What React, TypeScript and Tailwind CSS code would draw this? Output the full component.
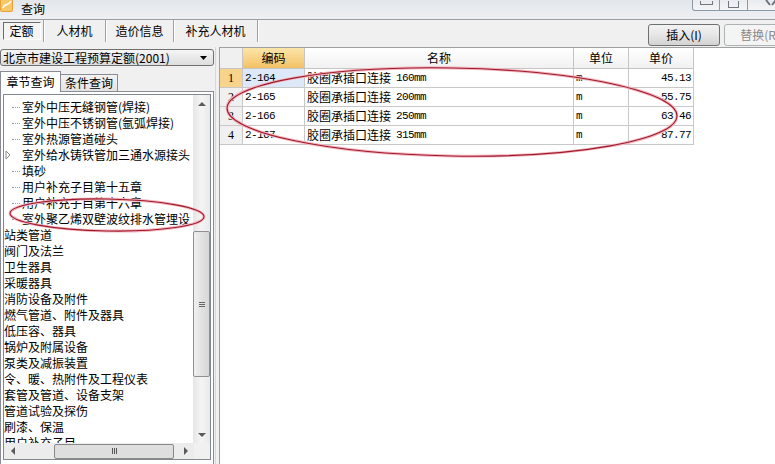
import React from "react";

const tree = [
  { t: "室外中压无缝钢管(焊接)", child: true },
  { t: "室外中压不锈钢管(氩弧焊接)", child: true },
  { t: "室外热源管道碰头", child: true },
  { t: "室外给水铸铁管加三通水源接头", child: true, arrow: true },
  { t: "填砂", child: true },
  { t: "用户补充子目第十五章", child: true },
  { t: "用户补充子目第十六章", child: true },
  { t: "室外聚乙烯双壁波纹排水管埋设", child: true },
  { t: "站类管道" },
  { t: "阀门及法兰" },
  { t: "卫生器具" },
  { t: "采暖器具" },
  { t: "消防设备及附件" },
  { t: "燃气管道、附件及器具" },
  { t: "低压容、器具" },
  { t: "锅炉及附属设备" },
  { t: "泵类及减振装置" },
  { t: "令、暖、热附件及工程仪表" },
  { t: "套管及管道、设备支架" },
  { t: "管道试验及探伤" },
  { t: "刷漆、保温" },
  { t: "用户补充子目" },
];

const rows = [
  { no: "1", code: "2-164", size: "160mm", price: "45.13" },
  { no: "2", code: "2-165", size: "200mm", price: "55.75" },
  { no: "3", code: "2-166", size: "250mm", price: "63.46" },
  { no: "4", code: "2-167", size: "315mm", price: "87.77" },
];

const mono = "font-['Liberation_Mono','Noto_Sans_CJK_SC',monospace] text-[11px] tracking-[-0.6px]";

const Tri = ({ dir }: { dir: "up" | "down" | "left" | "right" }) => {
  const pts = {
    up: "0,5 4,1 8,5",
    down: "0,1 4,5 8,1",
    left: "5,0 1,4 5,8",
    right: "1,0 5,4 1,8",
  }[dir];
  const vert = dir === "up" || dir === "down";
  return (
    <svg width={vert ? 8 : 6} height={vert ? 6 : 8} viewBox={vert ? "0 0 8 6" : "0 0 6 8"}>
      <polygon points={pts} fill="#5a5a5a" />
    </svg>
  );
};

function TitleBar() {
  return (
    <div className="flex h-[20px] shrink-0 items-start overflow-hidden border-b border-[#9a9fa6] bg-gradient-to-b from-[#e2e6eb] to-[#eef0f3]">
      <svg width="14" height="14" viewBox="0 0 14 14" className="-mt-[2px] shrink-0">
        <rect x="0" y="0" width="13" height="14" rx="2" fill="#e9a23b" />
        <rect x="1" y="1" width="11" height="12" rx="1" fill="#f6c868" />
        <path d="M3 10 C5 4, 8 9, 11 3" stroke="#fff" strokeWidth="1.5" fill="none" />
      </svg>
      <span className="ml-[7px] mt-[3px] text-[12px]">查询</span>
      <div className="flex-1" />
      <div className="-mr-[19px] flex shrink-0">
        <div className="flex h-[11px] w-[28px] items-start justify-center rounded-bl-[3px] border border-t-0 border-[#8e99a6] bg-gradient-to-b from-[#e8ebef] to-[#f4f5f7]">
          <div className="mt-[1px] h-[4px] w-[13px] border border-t-0 border-[#707781]" />
        </div>
        <div className="flex h-[11px] w-[28px] items-start justify-center border-b border-r border-[#8e99a6] bg-gradient-to-b from-[#e8ebef] to-[#f4f5f7]">
          <div className="mt-[1px] h-[7px] w-[11px] border border-t-0 border-[#707781]" />
        </div>
        <div className="flex h-[11px] w-[46px] items-start justify-center rounded-br-[3px] border-b border-r border-[#8e99a6] bg-gradient-to-b from-[#e8ebef] to-[#f4f5f7]">
          <svg width="12" height="8" viewBox="0 0 12 8">
            <path d="M1 0 L5 5 M11 0 L7 5" stroke="#6b727c" strokeWidth="2" />
          </svg>
        </div>
      </div>
    </div>
  );
}

function TopRow() {
  const tabs = [
    { t: "定额", w: "w-[44px]", on: true },
    { t: "人材机", w: "w-[62px]" },
    { t: "造价信息", w: "w-[68px]" },
    { t: "补充人材机", w: "w-[84px]" },
  ];
  return (
    <div className="flex h-[27px] shrink-0 overflow-hidden">
      <div className="flex h-[22px]">
        {tabs.map((tab) => (
          <div key={tab.t} className={`${tab.w} flex items-center justify-center border-r border-[#a0a0a0] shadow-[1px_0_0_#fff]`}>
            {tab.on ? (
              <div className="flex h-[18px] w-[38px] items-center justify-center border border-b-white border-l-[#6d6d6d] border-r-white border-t-[#6d6d6d] bg-[#f4f4f4]">
                {tab.t}
              </div>
            ) : (
              <span>{tab.t}</span>
            )}
          </div>
        ))}
      </div>
      <div className="ml-[390px] flex shrink-0 gap-[4px] pt-[4px]">
        <div className="flex h-[22px] w-[72px] items-center justify-center rounded-[3px] border border-[#707070] bg-gradient-to-b from-[#f3f3f3] via-[#e6e6e6] to-[#d2d2d2]">
          插入(I)
        </div>
        <div className="flex h-[22px] w-[72px] items-center justify-center rounded-[3px] border border-[#adb2b5] bg-[#f4f4f4] text-[#8a8a8a]">
          替换(R)
        </div>
      </div>
    </div>
  );
}

function TreeList() {
  return (
    <div className="flex h-[366px] w-full shrink-0 flex-col overflow-hidden border border-[#828790] bg-white">
      <div className="flex h-[348px] shrink-0 overflow-hidden">
        <div className="h-[348px] min-w-0 flex-1 overflow-hidden pt-[4px]">
          {tree.map((it) => (
            <div key={it.t} className="flex h-[16px] items-center whitespace-nowrap">
              {it.child ? (
                <span className="flex w-[18px] shrink-0 items-center">
                  {it.arrow ? (
                    <svg width="18" height="10" viewBox="0 0 18 10">
                      <polygon points="2,1 6,5 2,9" fill="none" stroke="#8a8a8a" />
                    </svg>
                  ) : (
                    <span className="ml-[8px] w-[8px] border-t border-dotted border-[#9a9a9a]" />
                  )}
                </span>
              ) : null}
              <span>{it.t}</span>
            </div>
          ))}
        </div>
        <div className="flex w-[17px] shrink-0 flex-col bg-gradient-to-r from-[#e6e6e6] via-[#f4f4f4] to-[#e9e9e9]">
          <div className="flex h-[17px] shrink-0 items-center justify-center"><Tri dir="up" /></div>
          <div className="h-[119px] shrink-0" />
          <div className="flex h-[146px] shrink-0 items-center justify-center rounded-[2px] border border-[#8f8f8f] bg-gradient-to-r from-[#f0f0f0] via-[#e2e2e2] to-[#d6d6d6]">
            <div className="flex flex-col gap-[1px]">
              <div className="h-px w-[6px] bg-[#666]" />
              <div className="h-px w-[6px] bg-[#666]" />
              <div className="h-px w-[6px] bg-[#666]" />
            </div>
          </div>
          <div className="flex-1" />
          <div className="flex h-[17px] shrink-0 items-center justify-center"><Tri dir="down" /></div>
        </div>
      </div>
      <div className="flex h-[16px] shrink-0 items-center bg-[#ececec]">
        <div className="flex h-[16px] w-[17px] shrink-0 items-center justify-center"><Tri dir="left" /></div>
        <div className="h-[16px] w-[33px] shrink-0" />
        <div className="flex h-[15px] w-[120px] shrink-0 items-center justify-center gap-[1px] rounded-[2px] border border-[#8a8a8a] bg-[#dedede]">
          <div className="h-[6px] w-px bg-[#555]" />
          <div className="h-[6px] w-px bg-[#555]" />
          <div className="h-[6px] w-px bg-[#555]" />
        </div>
        <div className="h-[16px] w-[3px] shrink-0" />
        <div className="flex h-[16px] w-[17px] shrink-0 items-center justify-center"><Tri dir="right" /></div>
        <div className="h-[16px] w-[17px] shrink-0 bg-[#f0f0f0]" />
      </div>
    </div>
  );
}

function LeftPanel() {
  return (
    <div className="flex min-h-0 w-[216px] shrink-0 flex-col border-r border-[#d8d8d8] pt-[2px]">
      <div className="flex h-[17px] w-[214px] shrink-0 items-center rounded-[3px] border border-[#707070] bg-gradient-to-b from-[#f5f5f5] to-[#dedede] pl-[2px] pr-[6px]">
        <span className="flex-1">北京市建设工程预算定额(2001)</span>
        <svg width="7" height="4" viewBox="0 0 7 4"><polygon points="0,0 7,0 3.5,4" fill="#000" /></svg>
      </div>
      <div className="mt-[4px] flex h-[21px] shrink-0 items-end">
        <div className="relative z-10 -mb-px flex h-[21px] w-[61px] items-center justify-center border border-b-0 border-[#898c95] bg-white">章节查询</div>
        <div className="flex h-[17px] w-[57px] items-center justify-center border border-b-0 border-l-0 border-[#898c95] bg-gradient-to-b from-[#f3f3f3] to-[#e3e3e3]">条件查询</div>
      </div>
      <div className="flex h-[376px] w-[214px] shrink-0 flex-col border border-[#898c95] bg-white p-[2px]">
        <TreeList />
      </div>
    </div>
  );
}

function Grid() {
  const cols = "grid grid-cols-[23px_62px_269px_55px_65px]";
  const hd = "flex items-center justify-center border-b border-r border-[#c5c5c5]";
  const cell = "flex items-center border-b border-r border-[#c8c8c8] h-[19px]";
  return (
    <div className="ml-[3px] flex-1 border-l border-t border-[#a0a0a0] bg-white">
      <div className={`${cols} h-[21px]`}>
        <div className={`${hd} bg-[#f0f0f0]`} />
        <div className={`${hd} bg-gradient-to-b from-[#fce5a9] to-[#f2c264]`}>编码</div>
        <div className={`${hd} bg-gradient-to-b from-white to-[#f1f1f1]`}>名称</div>
        <div className={`${hd} bg-gradient-to-b from-white to-[#f1f1f1]`}>单位</div>
        <div className={`${hd} bg-gradient-to-b from-white to-[#f1f1f1]`}>单价</div>
      </div>
      {rows.map((r, i) => (
        <div key={r.no} className={cols}>
          <div className={`${cell} justify-center ${i === 0 ? "bg-[#f8d38c]" : "bg-[#f0f0f0]"} font-['Liberation_Serif',serif] text-[12px]`}>{r.no}</div>
          <div className={`${cell} pl-[2px] ${i === 0 ? "bg-[#dde9f8]" : ""} ${mono}`}>{r.code}</div>
          <div className={`${cell} pl-[2px]`}>
            <span>胶圈承插口连接</span>
            <span className={`${mono} ml-[5px]`}>{r.size}</span>
          </div>
          <div className={`${cell} pl-[2px] ${mono}`}>m</div>
          <div className={`${cell} justify-end pr-[2px] ${mono}`}>{r.price}</div>
        </div>
      ))}
    </div>
  );
}

function Marks() {
  return (
    <svg className="pointer-events-none absolute inset-0" width="775" height="464" viewBox="0 0 775 464">
      <g fill="none">
        <ellipse cx="107" cy="215" rx="97" ry="16" transform="rotate(1 107 215)" stroke="#f3b6c0" strokeWidth="3" />
        <ellipse cx="107" cy="215" rx="97" ry="16" transform="rotate(1 107 215)" stroke="#9e1a2a" strokeWidth="1.1" />
        <ellipse cx="452" cy="112" rx="225" ry="44" transform="rotate(1 452 112)" stroke="#f3b6c0" strokeWidth="3" />
        <ellipse cx="452" cy="112" rx="225" ry="44" transform="rotate(1 452 112)" stroke="#9e1a2a" strokeWidth="1.1" />
      </g>
    </svg>
  );
}

export default function App() {
  return (
    <div className="relative flex h-[464px] w-[775px] flex-col overflow-hidden bg-[#f0f0f0] font-['Noto_Sans_CJK_SC',sans-serif] text-[12px] leading-none text-black">
      <TitleBar />
      <TopRow />
      <div className="flex min-h-0 flex-1">
        <LeftPanel />
        <Grid />
      </div>
      <Marks />
    </div>
  );
}
